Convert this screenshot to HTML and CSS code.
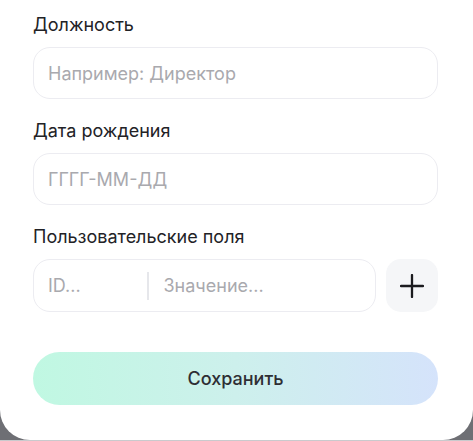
FILE: index.html
```html
<!DOCTYPE html>
<html lang="ru">
<head>
<meta charset="utf-8">
<link rel="stylesheet" href="styles.css">
</head>
<body>
<div class="card">
  <div class="field">
    <label class="label">Должность</label>
    <div class="input"><span class="ph">Например: Директор</span></div>
  </div>
  <div class="field">
    <label class="label">Дата рождения</label>
    <div class="input"><span class="ph">ГГГГ-ММ-ДД</span></div>
  </div>
  <div class="field">
    <label class="label">Пользовательские поля</label>
    <div class="custom-row">
      <div class="input pair">
        <span class="ph id">ID...</span>
        <span class="divider"></span>
        <span class="ph val">Значение...</span>
      </div>
      <button class="add" aria-label="Добавить">
        <svg width="24" height="24" viewBox="0 0 24 24"><path d="M12 1v22M1 12h22" stroke="#1b1b1f" stroke-width="2.3" stroke-linecap="round" fill="none"/></svg>
      </button>
    </div>
  </div>
  <button class="save">Сохранить</button>
</div>
</body>
</html>
```
FILE: styles.css
```css
html, body {
  margin: 0;
  padding: 0;
}
body {
  width: 473px;
  height: 441px;
  background: linear-gradient(to bottom, #6e6f74 440px, #c9cacd 440px);
  font-family: Inter, "Noto Sans", sans-serif;
  overflow: hidden;
}
.card {
  box-sizing: border-box;
  height: 440px;
  background: #fff;
  border-radius: 0 0 30px 30px;
  padding: 13px 35px 0 33px;
  display: flex;
  flex-direction: column;
  gap: 20px;
}
.field {
  display: flex;
  flex-direction: column;
  gap: 10px;
}
.label {
  font-size: 18px;
  line-height: 24px;
  color: #222226;
  font-weight: 400;
}
.input {
  box-sizing: border-box;
  height: 52px;
  border: 1.5px solid #ececf1;
  border-radius: 17px;
  display: flex;
  align-items: center;
  padding: 0 14px;
}
.ph {
  font-size: 18px;
  color: #a9a9ae;
}
.custom-row {
  display: flex;
  gap: 10px;
}
.pair {
  flex: 1;
  height: 53px;
}
.pair .id {
  width: 99px;
}
.divider {
  width: 1.5px;
  height: 28px;
  background: #e6e7eb;
  margin-right: 15px;
}
.add {
  width: 52px;
  height: 53px;
  border: none;
  border-radius: 15px;
  background: #f5f6f8;
  display: flex;
  align-items: center;
  justify-content: center;
  padding: 0;
}
.save {
  margin-top: 20px;
  height: 53px;
  border: none;
  border-radius: 27px;
  background: linear-gradient(to right, #c0f8e2, #cdf0ec 50%, #d5e3fb);
  font-family: Inter, "Noto Sans", sans-serif;
  font-size: 18px;
  font-weight: 500;
  color: #2e2e34;
}
```
